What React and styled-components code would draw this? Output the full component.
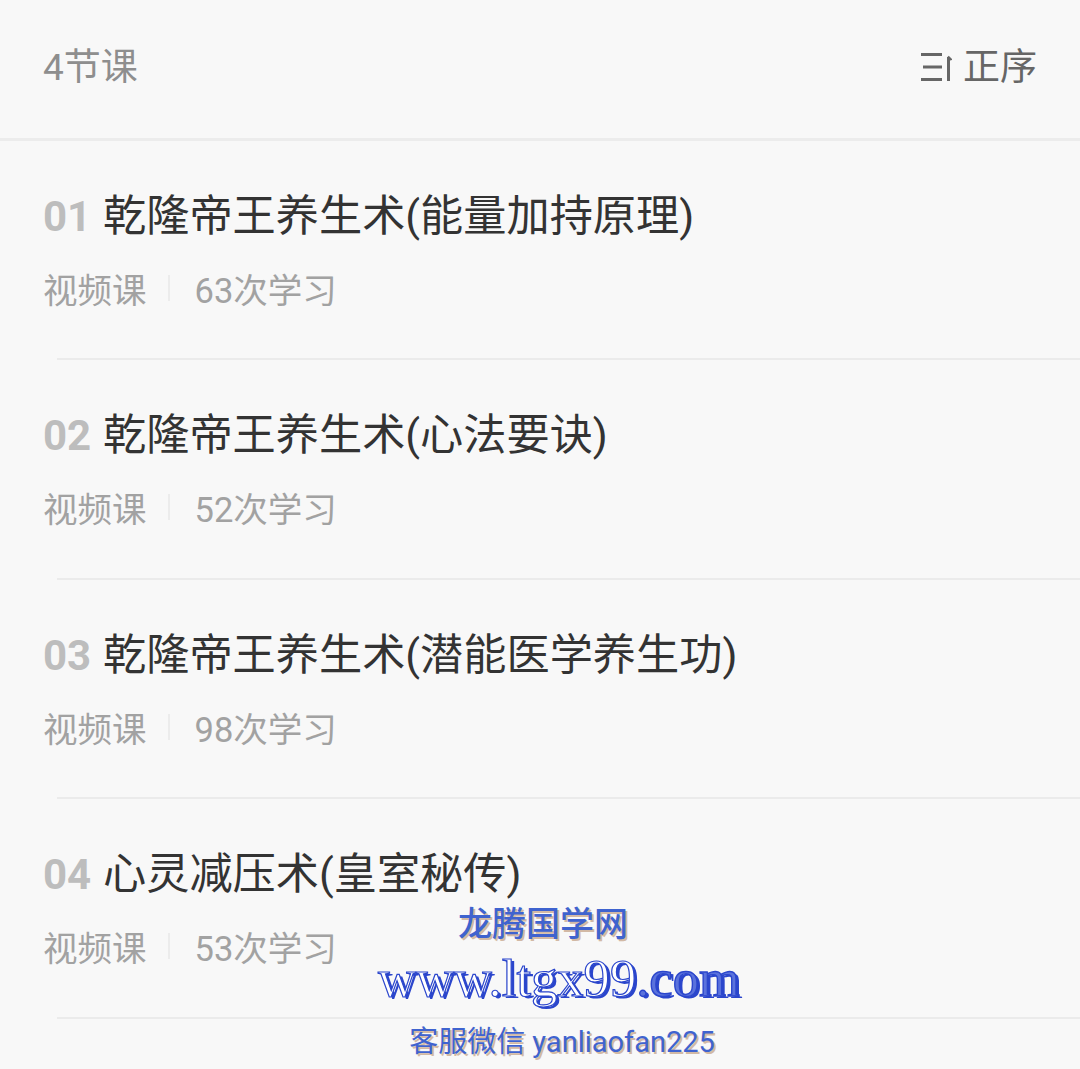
import React from "react";
import styled, { createGlobalStyle } from "styled-components";

const Global = createGlobalStyle`
  html, body { margin: 0; padding: 0; background: #f8f8f8; }
  body { width: 1080px; height: 1069px; overflow: hidden; font-family: "Roboto", "Noto Sans CJK SC", sans-serif; }
`;
const Page = styled.div`
  position: relative;
  width: 1080px;
  height: 1069px;
  overflow: hidden;
  background: #f8f8f8;
`;
const Header = styled.header`
  display: flex;
  align-items: center;
  justify-content: space-between;
  box-sizing: border-box;
  height: 141px;
  padding: 0 43px 4px 43px;
  border-bottom: 3px solid #ececec;
`;
const Count = styled.div`
  font-size: 37px;
  color: #8e8e8e;
  line-height: 1;
`;
const Sort = styled.div`
  display: flex;
  align-items: center;
  gap: 11px;
  font-size: 37px;
  color: #666;
  line-height: 1;
`;
const List = styled.div`
  display: flex;
  flex-direction: column;
`;
const Row = styled.div`
  box-sizing: border-box;
  height: 219.4px;
  margin-left: 57px;
  padding-top: 40px;
  border-bottom: 2px solid #ebebeb;
`;
const TitleLine = styled.div`
  display: flex;
  align-items: baseline;
  margin-left: -14px;
  height: 60px;
`;
const Num = styled.span`
  width: 60px;
  font-size: 42px;
  font-weight: 700;
  color: #bdbdbd;
`;
const Title = styled.span`
  font-size: 43.2px;
  color: #333;
  white-space: nowrap;
`;
const Meta = styled.div`
  display: flex;
  align-items: center;
  margin: 23px 0 0 -14px;
  height: 48px;
  font-size: 34.5px;
  color: #a2a2a2;
  white-space: nowrap;
`;
const Sep = styled.i`
  width: 2px;
  height: 26px;
  margin: 0 25px 0 21px;
  background: #ececec;
`;
const Mark = styled.div`
  position: absolute;
  left: 0;
  right: 0;
  top: 900px;
  display: flex;
  flex-direction: column;
  align-items: center;
  pointer-events: none;
  white-space: nowrap;
`;
const MarkTop = styled.div`
  font-size: 34px;
  line-height: 48px;
  font-weight: 500;
  color: #3f63cf;
  text-shadow: 2px 2px 0 #d2b9a5;
  transform: translateX(3px);
`;
const MarkUrl = styled.div`
  font-family: "Liberation Serif", serif;
  font-size: 52.6px;
  line-height: 60px;
  color: #fff;
  -webkit-text-stroke: 1.2px #2b46cc;
  text-shadow: 3px 2px 0 #2b46cc;
  transform: translateX(19px);
`;
const UrlEnd = styled.span`
  color: #5a72dc;
  -webkit-text-stroke: 1.4px #2b46cc;
`;
const MarkBottom = styled.div`
  font-size: 29px;
  line-height: 44px;
  color: #3f63cf;
  text-shadow: 2px 2px 0 #d2b9a5;
  margin-top: 12px;
  transform: translateX(22px);
`;

const SortIcon = () => (
  <svg width="32" height="30" viewBox="0 0 32 30" fill="none" stroke="#666" strokeWidth="3">
    <path d="M1 2.5h21M3 15h19M1 27.5h21" />
    <path d="M28.5 29V5" />
    <path d="M28 4.5L31.5 8" strokeWidth="2" />
  </svg>
);

const lessons = [
  { no: "01", title: "乾隆帝王养生术(能量加持原理)", n: 63 },
  { no: "02", title: "乾隆帝王养生术(心法要诀)", n: 52 },
  { no: "03", title: "乾隆帝王养生术(潜能医学养生功)", n: 98 },
  { no: "04", title: "心灵减压术(皇室秘传)", n: 53 },
];

export default function App() {
  return (
    <Page>
      <Global />
      <Header>
        <Count>4节课</Count>
        <Sort>
          <SortIcon />
          正序
        </Sort>
      </Header>
      <List>
        {lessons.map((l) => (
          <Row key={l.no}>
            <TitleLine>
              <Num>{l.no}</Num>
              <Title>{l.title}</Title>
            </TitleLine>
            <Meta>
              视频课
              <Sep />
              {l.n}次学习
            </Meta>
          </Row>
        ))}
      </List>
      <Mark>
        <MarkTop>龙腾国学网</MarkTop>
        <MarkUrl>www.ltgx99<UrlEnd>.com</UrlEnd></MarkUrl>
        <MarkBottom>客服微信 yanliaofan225</MarkBottom>
      </Mark>
    </Page>
  );
}
